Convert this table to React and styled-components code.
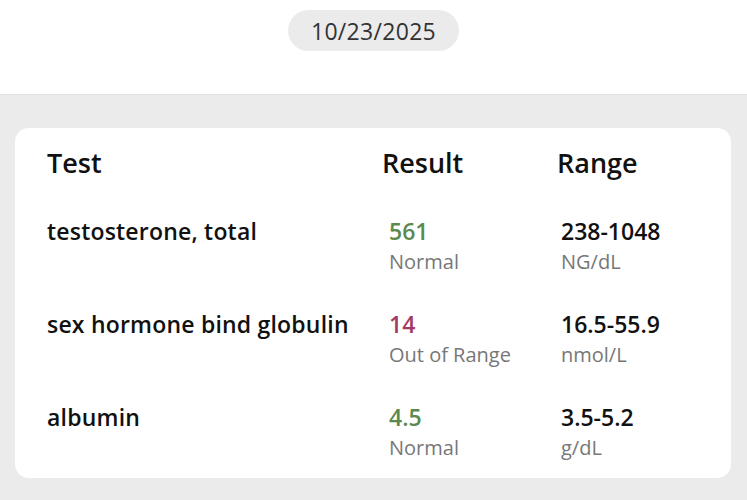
import React from 'react'
import styled, { createGlobalStyle } from 'styled-components'

const GlobalStyle = createGlobalStyle`
    html, body {
        margin: 0;
        padding: 0;
        background: #ebebeb;
        font-family: "Open Sans", Lato, sans-serif;
    }
`;

const Top = styled.div`
    height: 95px;
    background: #ffffff;
    border-bottom: 1px solid #e0e0e0;
    box-sizing: border-box;
    display: flex;
    justify-content: center;
    padding-top: 10px;
`;

const DatePill = styled.div`
    height: 41px;
    width: 171px;
    border-radius: 21px;
    background: #ebebeb;
    color: #333333;
    font-size: 23px;
    letter-spacing: 0.3px;
    display: flex;
    align-items: center;
    justify-content: center;
`;

const Body = styled.div`
    padding: 33px 16px 22px 15px;
`;

const Card = styled.div`
    background: #ffffff;
    border-radius: 14px;
    padding: 19px 20px 15px 32px;
    display: grid;
    grid-template-columns: 335px 175px 1fr;
    row-gap: 32px;
`;

const Head = styled.div`
    font-size: 27px;
    line-height: 32px;
    font-weight: 600;
    color: #111111;
    margin-bottom: 5px;
`;

const Name = styled.div`
    font-size: 23px;
    line-height: 30px;
    font-weight: 600;
    letter-spacing: 0.2px;
    color: #111111;
    white-space: nowrap;
`;

const Cell = styled.div`
    padding-left: ${p => p.$indent}px;
    display: flex;
    flex-direction: column;
`;

const Value = styled.div`
    font-size: 23px;
    line-height: 30px;
    font-weight: 600;
    color: ${p => p.$color || '#111111'};
    margin-bottom: 1px;
`;

const Sub = styled.div`
    font-size: 20px;
    line-height: 30px;
    color: #777777;
`;

const rows = [
    { name: 'testosterone, total', value: '561', status: 'Normal', ok: true, range: '238-1048', unit: 'NG/dL' },
    { name: 'sex hormone bind globulin', value: '14', status: 'Out of Range', ok: false, range: '16.5-55.9', unit: 'nmol/L' },
    { name: 'albumin', value: '4.5', status: 'Normal', ok: true, range: '3.5-5.2', unit: 'g/dL' },
];

const App = () => {
    return (
        <>
            <GlobalStyle />
            <Top>
                <DatePill>10/23/2025</DatePill>
            </Top>
            <Body>
                <Card>
                    <Head>Test</Head>
                    <Head>Result</Head>
                    <Head>Range</Head>
                    {rows.map(r => (
                        <React.Fragment key={r.name}>
                            <Name>{r.name}</Name>
                            <Cell $indent={7}>
                                <Value $color={r.ok ? '#5b8a4e' : '#a33a64'}>{r.value}</Value>
                                <Sub>{r.status}</Sub>
                            </Cell>
                            <Cell $indent={4}>
                                <Value>{r.range}</Value>
                                <Sub>{r.unit}</Sub>
                            </Cell>
                        </React.Fragment>
                    ))}
                </Card>
            </Body>
        </>
    )
}

export default App
